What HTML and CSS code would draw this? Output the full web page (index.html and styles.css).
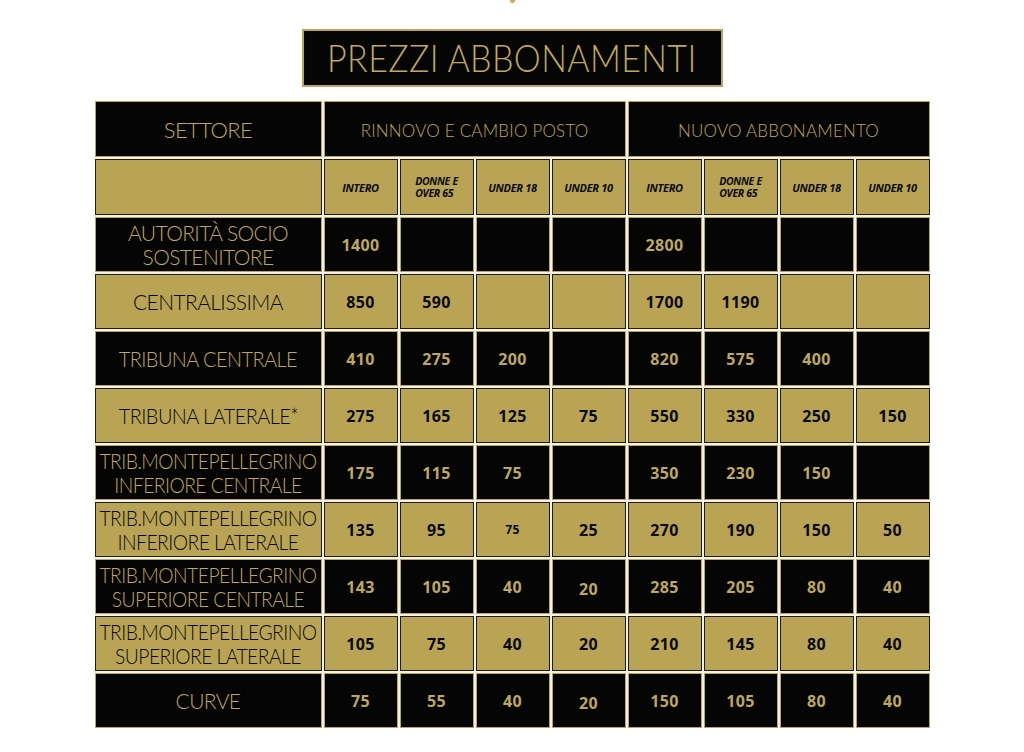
FILE: index.html
```html
<!DOCTYPE html>
<html lang="it">
<head>
<meta charset="utf-8">
<title>Prezzi Abbonamenti</title>
<link rel="stylesheet" href="styles.css">
</head>
<body>
<div class="page">
  <div class="mark"></div>
  <h1 class="title"><span class="title-text">PREZZI ABBONAMENTI</span></h1>
  <div class="prices">
    <div class="cell dark head sector">SETTORE</div>
    <div class="cell dark head group g1">RINNOVO E CAMBIO POSTO</div>
    <div class="cell dark head group g2">NUOVO ABBONAMENTO</div>

    <div class="cell gold sector"></div>
    <div class="cell gold sub">INTERO</div>
    <div class="cell gold sub two">DONNE E<br>OVER 65</div>
    <div class="cell gold sub">UNDER 18</div>
    <div class="cell gold sub">UNDER 10</div>
    <div class="cell gold sub">INTERO</div>
    <div class="cell gold sub two">DONNE E<br>OVER 65</div>
    <div class="cell gold sub">UNDER 18</div>
    <div class="cell gold sub">UNDER 10</div>

    <div class="cell dark sector">AUTORITÀ SOCIO<br>SOSTENITORE</div>
    <div class="cell dark num">1400</div><div class="cell dark num"></div><div class="cell dark num"></div><div class="cell dark num"></div>
    <div class="cell dark num">2800</div><div class="cell dark num"></div><div class="cell dark num"></div><div class="cell dark num"></div>

    <div class="cell gold sector">CENTRALISSIMA</div>
    <div class="cell gold num">850</div><div class="cell gold num">590</div><div class="cell gold num"></div><div class="cell gold num"></div>
    <div class="cell gold num">1700</div><div class="cell gold num">1190</div><div class="cell gold num"></div><div class="cell gold num"></div>

    <div class="cell dark sector"><span class="narrow n1">TRIBUNA CENTRALE</span></div>
    <div class="cell dark num">410</div><div class="cell dark num">275</div><div class="cell dark num">200</div><div class="cell dark num"></div>
    <div class="cell dark num">820</div><div class="cell dark num">575</div><div class="cell dark num">400</div><div class="cell dark num"></div>

    <div class="cell gold sector"><span class="narrow n1">TRIBUNA LATERALE*</span></div>
    <div class="cell gold num">275</div><div class="cell gold num">165</div><div class="cell gold num">125</div><div class="cell gold num">75</div>
    <div class="cell gold num">550</div><div class="cell gold num">330</div><div class="cell gold num">250</div><div class="cell gold num">150</div>

    <div class="cell dark sector"><span class="narrow n2">TRIB.MONTEPELLEGRINO<br>INFERIORE CENTRALE</span></div>
    <div class="cell dark num">175</div><div class="cell dark num">115</div><div class="cell dark num">75</div><div class="cell dark num"></div>
    <div class="cell dark num">350</div><div class="cell dark num">230</div><div class="cell dark num">150</div><div class="cell dark num"></div>

    <div class="cell gold sector"><span class="narrow n2">TRIB.MONTEPELLEGRINO<br>INFERIORE LATERALE</span></div>
    <div class="cell gold num">135</div><div class="cell gold num">95</div><div class="cell gold num small">75</div><div class="cell gold num">25</div>
    <div class="cell gold num">270</div><div class="cell gold num">190</div><div class="cell gold num">150</div><div class="cell gold num">50</div>

    <div class="cell dark sector"><span class="narrow n2">TRIB.MONTEPELLEGRINO<br>SUPERIORE CENTRALE</span></div>
    <div class="cell dark num">143</div><div class="cell dark num">105</div><div class="cell dark num">40</div><div class="cell dark num low">20</div>
    <div class="cell dark num">285</div><div class="cell dark num">205</div><div class="cell dark num">80</div><div class="cell dark num">40</div>

    <div class="cell gold sector"><span class="narrow n2">TRIB.MONTEPELLEGRINO<br>SUPERIORE LATERALE</span></div>
    <div class="cell gold num">105</div><div class="cell gold num">75</div><div class="cell gold num">40</div><div class="cell gold num">20</div>
    <div class="cell gold num">210</div><div class="cell gold num">145</div><div class="cell gold num">80</div><div class="cell gold num">40</div>

    <div class="cell dark sector">CURVE</div>
    <div class="cell dark num">75</div><div class="cell dark num">55</div><div class="cell dark num">40</div><div class="cell dark num low">20</div>
    <div class="cell dark num">150</div><div class="cell dark num">105</div><div class="cell dark num">80</div><div class="cell dark num">40</div>
  </div>
</div>
</body>
</html>
```
FILE: styles.css
```css
html, body {
  margin: 0;
  padding: 0;
  background: #ffffff;
}

.page {
  display: flex;
  flex-direction: column;
  align-items: center;
  width: 1024px;
  height: 752px;
}

.mark {
  width: 5px;
  height: 3px;
  background: #c9ad5a;
  border-radius: 0 0 3px 3px;
}

.title {
  margin: 26px 0 0 0;
  width: 417px;
  height: 54px;
  box-sizing: content-box;
  border: 2px solid #bba658;
  background: #050505;
  color: #bfa85c;
  font-family: "Lato", "DejaVu Sans", sans-serif;
  font-weight: 300;
  font-size: 37px;
  line-height: 54px;
  letter-spacing: 0.4px;
  text-align: center;
  white-space: nowrap;
}

.title-text {
  display: inline-block;
  transform: scaleX(0.92);
}

.prices {
  margin-top: 14px;
  display: grid;
  grid-template-columns: 227px repeat(8, 74px);
  grid-template-rows: 56px 56px repeat(9, 55px);
  column-gap: 2px;
  row-gap: 2px;
  background: #f4f1e6;
  width: 835px;
}

.cell {
  box-sizing: border-box;
  display: flex;
  align-items: center;
  justify-content: center;
  text-align: center;
  white-space: nowrap;
}

.dark {
  background: #050505;
  color: #bea85b;
  border: 1.5px solid #bba658;
}

.gold {
  background: #b9a456;
  color: #0a0a0a;
  border: 1.5px solid #1c1c1c;
}

.head {
  font-family: "Lato", "DejaVu Sans", sans-serif;
  font-weight: 300;
}

.head.sector {
  font-size: 22px;
  padding-top: 2px;
}

.group {
  font-size: 17px;
  letter-spacing: 0.2px;
  padding-top: 2px;
}

.g1 {
  grid-column: 2 / 6;
}

.g2 {
  grid-column: 6 / 10;
}

.sector {
  font-family: "Lato", "DejaVu Sans", sans-serif;
  font-weight: 300;
  font-size: 21px;
  line-height: 24px;
  letter-spacing: -0.6px;
}

.narrow {
  display: inline-block;
}

.n1 {
  transform: scaleX(0.95);
}

.n2 {
  letter-spacing: -0.6px;
  transform: scaleX(0.92);
}

.sub {
  font-family: "Open Sans", "DejaVu Sans", sans-serif;
  font-weight: 700;
  font-style: italic;
  font-size: 11px;
  letter-spacing: -0.3px;
}

.sub.two {
  font-size: 10.5px;
  line-height: 12px;
  text-align: left;
}

.num {
  font-family: "Open Sans", "DejaVu Sans", sans-serif;
  font-weight: 700;
  font-size: 16px;
  letter-spacing: 0.3px;
}

.num.small {
  font-size: 12px;
}

.num.low {
  padding-top: 4px;
}
```
